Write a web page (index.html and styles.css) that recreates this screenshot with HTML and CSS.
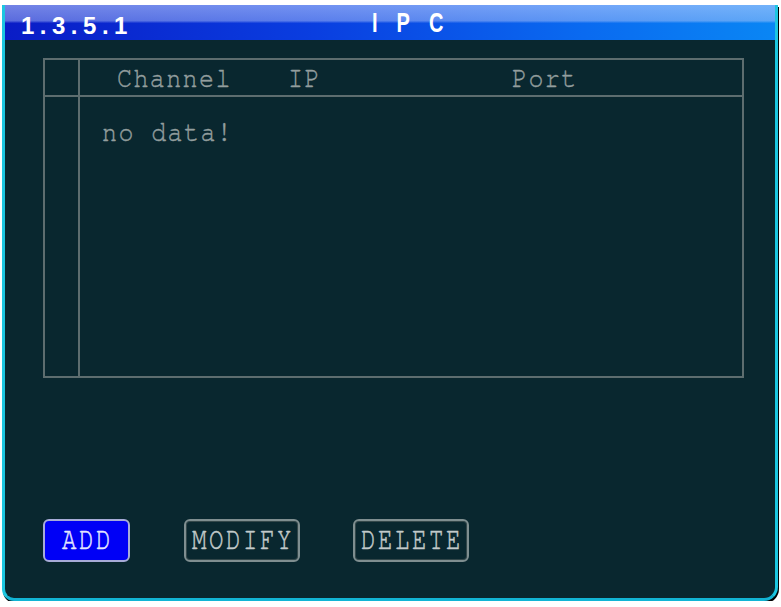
FILE: index.html
```html
<!DOCTYPE html>
<html>
<head>
<meta charset="utf-8">
<title>IPC</title>
<link rel="stylesheet" href="styles.css">
</head>
<body>
<div class="frame">
  <div class="titlebar">
    <span class="num">1.3.5.1</span>
    <span class="name">IPC</span>
  </div>
  <div class="content">
    <div class="table">
      <div class="thead">
        <div class="idx"></div>
        <div class="cols">
          <span class="col col-ch">Channel</span>
          <span class="col col-ip">IP</span>
          <span class="col col-port">Port</span>
        </div>
      </div>
      <div class="tbody">
        <div class="idx"></div>
        <div class="rows">
          <div class="empty">no data!</div>
        </div>
      </div>
    </div>
    <div class="buttons">
      <div class="btn btn-active btn-add"><span class="lbl">ADD</span></div>
      <div class="btn btn-mod"><span class="lbl">MODIFY</span></div>
      <div class="btn btn-del"><span class="lbl">DELETE</span></div>
    </div>
  </div>
</div>
</body>
</html>
```

FILE: styles.css
```css
html, body {
  margin: 0;
  padding: 0;
  background: #ffffff;
}

.frame {
  margin: 5px 0 0 2px;
  width: 776px;
  height: 596px;
  box-sizing: border-box;
  border-left: 3px solid #1cc6e0;
  border-right: 3px solid #1cc6e0;
  border-bottom: 3px solid #12b4d4;
  border-radius: 0 0 14px 12px;
  background: #09272f;
  box-shadow: 1px 2px 0 #000;
  overflow: hidden;
  display: flex;
  flex-direction: column;
}

.titlebar {
  height: 35px;
  flex: none;
  display: flex;
  align-items: center;
  padding-left: 15px;
  background:
    linear-gradient(to bottom, rgba(200, 215, 255, 0.55) 0%, rgba(190, 205, 250, 0.45) 45%, rgba(255, 255, 255, 0) 52%, rgba(255, 255, 255, 0) 100%),
    linear-gradient(to right, #0a1cc6 0%, #0a3ee0 40%, #0a6af0 75%, #0a86f4 100%);
  color: #ffffff;
  font-family: "Liberation Sans", Arial, sans-serif;
  font-weight: bold;
}

.num {
  width: 351px;
  font-size: 24px;
  letter-spacing: 5.5px;
  padding-top: 7px;
  padding-left: 1px;
}

.name {
  display: inline-block;
  font-size: 20px;
  letter-spacing: 19px;
  transform: scaleY(1.4);
  transform-origin: center 60%;
  padding-top: 2px;
}

.content {
  flex: 1;
  padding: 18px 0 0 38px;
}

.table {
  width: 701px;
  height: 320px;
  box-sizing: border-box;
  border: 2px solid #5d6d6f;
  display: flex;
  flex-direction: column;
  font-family: "Nimbus Mono PS", "Nimbus Mono L", "FreeMono", "Courier New", Courier, "Liberation Mono", monospace;
  color: #939e9e;
  font-size: 25px;
  letter-spacing: 1.4px;
  -webkit-text-stroke: 0.35px #939e9e;
}

.idx {
  width: 33px;
  flex: none;
  border-right: 2px solid #5d6d6f;
}

.thead {
  height: 37px;
  box-sizing: border-box;
  border-bottom: 2px solid #5d6d6f;
  display: flex;
  flex: none;
}

.cols {
  display: flex;
  align-items: flex-start;
  line-height: 35px;
  padding-top: 1px;
}

.col {
  display: inline-block;
  transform: scaleY(1.18);
}

.col-ch {
  width: 171px;
  padding-left: 37px;
}

.col-ip {
  width: 224px;
}

.tbody {
  flex: 1;
  display: flex;
}

.rows {
  padding: 21px 0 0 22px;
  line-height: 30px;
}

.empty {
  display: inline-block;
  transform: scaleY(1.18);
}

.buttons {
  display: flex;
  gap: 54px;
  margin-top: 141px;
}

.btn {
  height: 43px;
  box-sizing: border-box;
  border: 2px solid #7f8e90;
  border-radius: 6px;
  display: flex;
  align-items: center;
  justify-content: center;
  font-family: "Nimbus Mono PS", "Nimbus Mono L", "FreeMono", "Courier New", Courier, "Liberation Mono", monospace;
  font-size: 24px;
  letter-spacing: 2.6px;
  color: #c2caca;
  -webkit-text-stroke: 0.4px #c2caca;
  box-shadow: inset 0 0 0 1px #33474a;
}

.btn .lbl {
  display: inline-block;
  transform: scaleY(1.3);
  padding-left: 2px;
  margin-top: -2px;
}

.btn-add {
  width: 87px;
}

.btn-mod {
  width: 116px;
}

.btn-del {
  width: 116px;
  margin-left: -1px;
}

.btn-active {
  background: #0000f6;
  border-color: #a7abd8;
  color: #e4e6ff;
  -webkit-text-stroke: 0.4px #e4e6ff;
  box-shadow: none;
}
```
